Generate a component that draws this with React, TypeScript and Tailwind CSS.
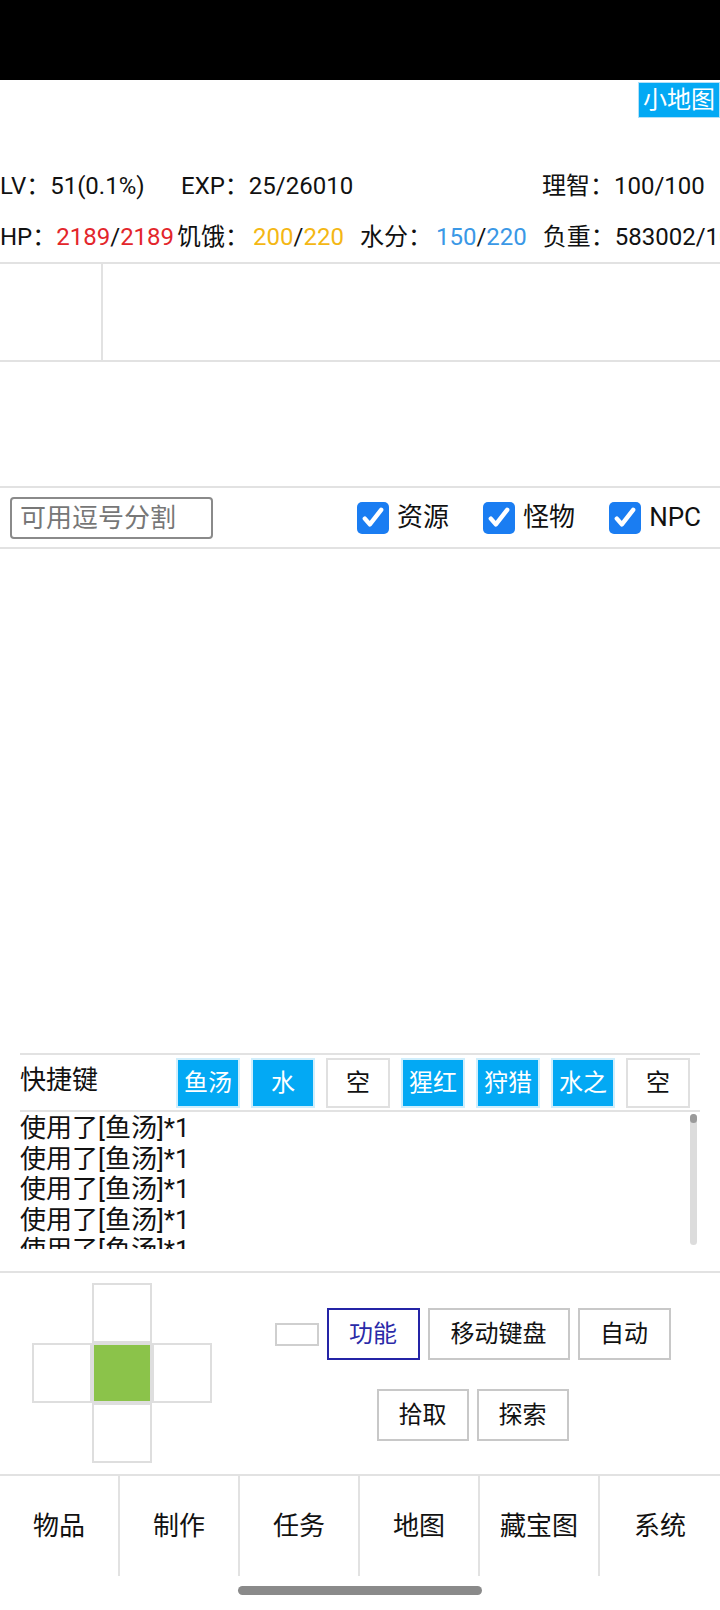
import React from 'react';

const shortcuts = [
  { label: '鱼汤', on: true },
  { label: '水', on: true },
  { label: '空', on: false },
  { label: '猩红', on: true },
  { label: '狩猎', on: true },
  { label: '水之', on: true },
  { label: '空', on: false },
];

const tabs = ['物品', '制作', '任务', '地图', '藏宝图', '系统'];

const Check = ({ label }: { label: string }) => (
  <label className="flex items-center gap-[8px]">
    <span className="w-[32px] h-[32px] rounded-[5px] bg-[#1a7df2] flex items-center justify-center">
      <svg viewBox="0 0 24 24" className="w-[28px] h-[28px]" fill="none" stroke="white" strokeWidth="3.8" strokeLinecap="round" strokeLinejoin="round">
        <path d="M5 12.5l4.3 5L19 5" />
      </svg>
    </span>
    <span className="text-[26px] text-[#111]">{label}</span>
  </label>
);

const Cell = ({ green }: { green?: boolean }) => (
  <div className={`w-[60px] h-[60px] border-2 border-[#dedede] ${green ? 'bg-[#8bc34a]' : 'bg-white'}`} />
);

export default function App() {
  return (
    <div
      className="w-[720px] h-[1610px] bg-white overflow-hidden text-[#111] flex flex-col"
      style={{ fontFamily: 'Roboto, "Noto Sans CJK SC", sans-serif' }}
    >
      {/* status bar */}
      <div className="h-[80px] bg-black shrink-0" />

      <div className="h-[38px] flex justify-end items-start pt-[2px]">
        <button className="w-[82px] h-[36px] bg-[#03a9f4] text-white text-[24px] leading-none border border-[#b3e0f7]">
          小地图
        </button>
      </div>

      {/* stats */}
      <div className="mt-[43px] h-[50px] flex items-center text-[24px] whitespace-nowrap">
        <span className="w-[181px]">LV：51(0.1%)</span>
        <span className="w-[361px]">EXP：25/26010</span>
        <span>理智：100/100</span>
      </div>
      <div className="h-[51px] flex items-center text-[24px] whitespace-nowrap overflow-hidden">
        <span>HP：</span>
        <span className="text-[#e3262b]">2189</span>/<span className="text-[#e3262b]">2189</span>
        <span className="ml-[3px] mr-[4px]">饥饿：</span>
        <span className="text-[#f4b714]">200</span>/<span className="text-[#f4b714]">220</span>
        <span className="ml-[16px] mr-[4px]">水分：</span>
        <span className="text-[#3a98e6]">150</span>/<span className="text-[#3a98e6]">220</span>
        <span className="ml-[16px]">负重：583002/1000000</span>
      </div>

      <div className="h-[100px] border-y-2 border-[#e2e2e2] flex shrink-0">
        <div className="w-[103px] border-r-2 border-[#e2e2e2]" />
        <div className="flex-1" />
      </div>

      <div className="h-[124px] shrink-0" />

      {/* filter */}
      <div className="h-[63px] border-y-2 border-[#e2e2e2] flex items-center justify-between pl-[10px] pr-[19px] shrink-0">
        <input
          placeholder="可用逗号分割"
          className="w-[203px] h-[42px] border-2 border-[#8a8a8a] rounded-[4px] px-[8px] text-[26px] placeholder:text-[#777] outline-none"
        />
        <div className="flex items-center gap-[34px]">
          <Check label="资源" />
          <Check label="怪物" />
          <Check label="NPC" />
        </div>
      </div>

      <div className="h-[504px] shrink-0" />

      {/* shortcuts + log */}
      <div className="mx-[20px] border-t-2 border-[#e2e2e2] shrink-0">
        <div className="h-[57px] flex items-center border-b-2 border-[#e2e2e2]">
          <span className="w-[156px] text-[26px] -mt-[4px]">快捷键</span>
          <div className="flex gap-[11px]">
            {shortcuts.map((s, i) => (
              <div
                key={i}
                className={`w-[64px] h-[50px] flex items-center justify-center text-[24px] border-2 ${
                  s.on ? 'bg-[#03a9f4] text-white border-[#cfeefc]' : 'bg-white text-[#111] border-[#e0e0e0]'
                }`}
              >
                {s.label}
              </div>
            ))}
          </div>
        </div>
        <div className="h-[137px] flex overflow-hidden">
          <div className="flex-1 text-[26px] leading-[30.5px] pt-[1px] overflow-hidden">
            {[0, 1, 2, 3, 4].map((i) => (
              <div key={i}>使用了[鱼汤]*1</div>
            ))}
          </div>
          <div className="w-[7px] mr-[3px] mt-[2px] mb-[4px] rounded-full bg-[#dcdcdc] relative">
            <div className="absolute top-0 left-0 w-[7px] h-[9px] rounded-full bg-[#9a9a9a]" />
          </div>
        </div>
      </div>

      <div className="h-[22px] shrink-0" />

      {/* controls */}
      <div className="h-[205px] border-y-2 border-[#e2e2e2] flex shrink-0">
        <div className="pl-[32px] pt-[10px]">
          <div className="grid grid-cols-[60px_60px_60px] grid-rows-[60px_60px_60px]">
            <div />
            <Cell />
            <div />
            <Cell />
            <Cell green />
            <Cell />
            <div />
            <Cell />
            <div />
          </div>
        </div>
        <div className="flex-1 flex flex-col items-center pt-[35px] pl-[13px]">
          <div className="flex items-center gap-[8px]">
            <div className="w-[44px] h-[23px] border-2 border-[#cfcfcf]" />
            <button className="w-[93px] h-[52px] border-2 border-[#2424a6] text-[#2a2aa8] text-[24px]">功能</button>
            <button className="w-[142px] h-[52px] border-2 border-[#c8c8c8] text-[24px]">移动键盘</button>
            <button className="w-[93px] h-[52px] border-2 border-[#c8c8c8] text-[24px]">自动</button>
          </div>
          <div className="flex items-center gap-[8px] mt-[29px]">
            <button className="w-[92px] h-[52px] border-2 border-[#c8c8c8] text-[24px]">拾取</button>
            <button className="w-[92px] h-[52px] border-2 border-[#c8c8c8] text-[24px]">探索</button>
          </div>
        </div>
      </div>

      {/* tabs */}
      <div className="h-[100px] grid grid-cols-6 shrink-0">
        {tabs.map((t, i) => (
          <div
            key={t}
            className={`flex items-center justify-center text-[26px] ${i < 5 ? 'border-r-2 border-[#e2e2e2]' : ''}`}
          >
            {t}
          </div>
        ))}
      </div>

      <div className="flex justify-center pt-[10px]">
        <div className="w-[244px] h-[9px] rounded-full bg-[#8a8a8a]" />
      </div>
    </div>
  );
}
